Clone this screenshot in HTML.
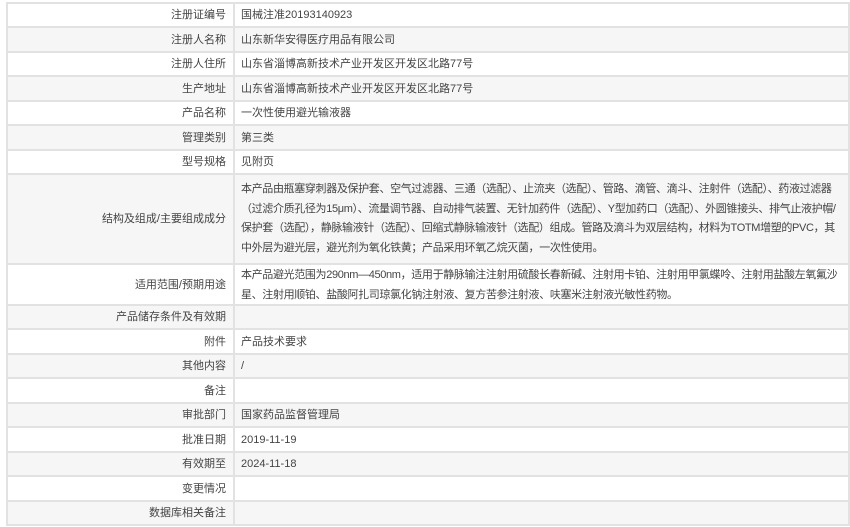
<!DOCTYPE html>
<html><head><meta charset="utf-8"><style>
body{margin:0;background:#fff;font-family:"Liberation Sans","Noto Sans CJK SC",sans-serif;font-size:11px;color:#444;}
.t{position:absolute;left:6px;top:2px;width:840px;border-top:2px solid #e2e2e2;border-left:2px solid #e2e2e2;border-right:2px solid #e2e2e2;}
.r{position:relative;display:flex;border-bottom:2px solid #e2e2e2;box-sizing:border-box;background:#fff;}
.g{background:#f6f6f6;}
.l{width:227px;flex:none;text-align:right;padding-right:7px;box-sizing:border-box;border-right:2px solid #e2e2e2;display:flex;align-items:center;justify-content:flex-end;line-height:14px;}
.v{flex:1;padding:0 6px;display:flex;align-items:center;line-height:14px;}
.v.top{align-items:flex-start;padding-top:5px;line-height:19.5px;letter-spacing:-0.35px;}
</style></head><body>
<div class="t">
<div class="r" style="height:24px"><div class="l">注册证编号</div><div class="v">国械注准20193140923</div></div>
<div class="r g" style="height:25px"><div class="l">注册人名称</div><div class="v">山东新华安得医疗用品有限公司</div></div>
<div class="r" style="height:24px"><div class="l">注册人住所</div><div class="v">山东省淄博高新技术产业开发区开发区北路77号</div></div>
<div class="r g" style="height:25px"><div class="l">生产地址</div><div class="v">山东省淄博高新技术产业开发区开发区北路77号</div></div>
<div class="r" style="height:24px"><div class="l">产品名称</div><div class="v">一次性使用避光输液器</div></div>
<div class="r g" style="height:25px"><div class="l">管理类别</div><div class="v">第三类</div></div>
<div class="r" style="height:24px"><div class="l">型号规格</div><div class="v">见附页</div></div>
<div class="r g" style="height:90px"><div class="l">结构及组成/主要组成成分</div><div class="v top">本产品由瓶塞穿刺器及保护套、空气过滤器、三通（选配）、止流夹（选配）、管路、滴管、滴斗、注射件（选配）、药液过滤器（过滤介质孔径为15μm）、流量调节器、自动排气装置、无针加药件（选配）、Y型加药口（选配）、外圆锥接头、排气止液护帽/保护套（选配），静脉输液针（选配）、回缩式静脉输液针（选配）组成。管路及滴斗为双层结构，材料为TOTM增塑的PVC，其中外层为避光层，避光剂为氧化铁黄；产品采用环氧乙烷灭菌，一次性使用。</div></div>
<div class="r" style="height:41px"><div class="l">适用范围/预期用途</div><div class="v top" style="padding-top:1px">本产品避光范围为290nm—450nm，适用于静脉输注注射用硫酸长春新碱、注射用卡铂、注射用甲氯蝶呤、注射用盐酸左氧氟沙星、注射用顺铂、盐酸阿扎司琼氯化钠注射液、复方苦参注射液、呋塞米注射液光敏性药物。</div></div>
<div class="r g" style="height:24px"><div class="l">产品储存条件及有效期</div><div class="v"></div></div>
<div class="r" style="height:25px"><div class="l">附件</div><div class="v">产品技术要求</div></div>
<div class="r g" style="height:24px"><div class="l">其他内容</div><div class="v">/</div></div>
<div class="r" style="height:25px"><div class="l">备注</div><div class="v"></div></div>
<div class="r g" style="height:24px"><div class="l">审批部门</div><div class="v">国家药品监督管理局</div></div>
<div class="r" style="height:25px"><div class="l">批准日期</div><div class="v">2019-11-19</div></div>
<div class="r g" style="height:24px"><div class="l">有效期至</div><div class="v">2024-11-18</div></div>
<div class="r" style="height:25px"><div class="l">变更情况</div><div class="v"></div></div>
<div class="r g" style="height:24px"><div class="l">数据库相关备注</div><div class="v"></div></div>
</div>
</body></html>
